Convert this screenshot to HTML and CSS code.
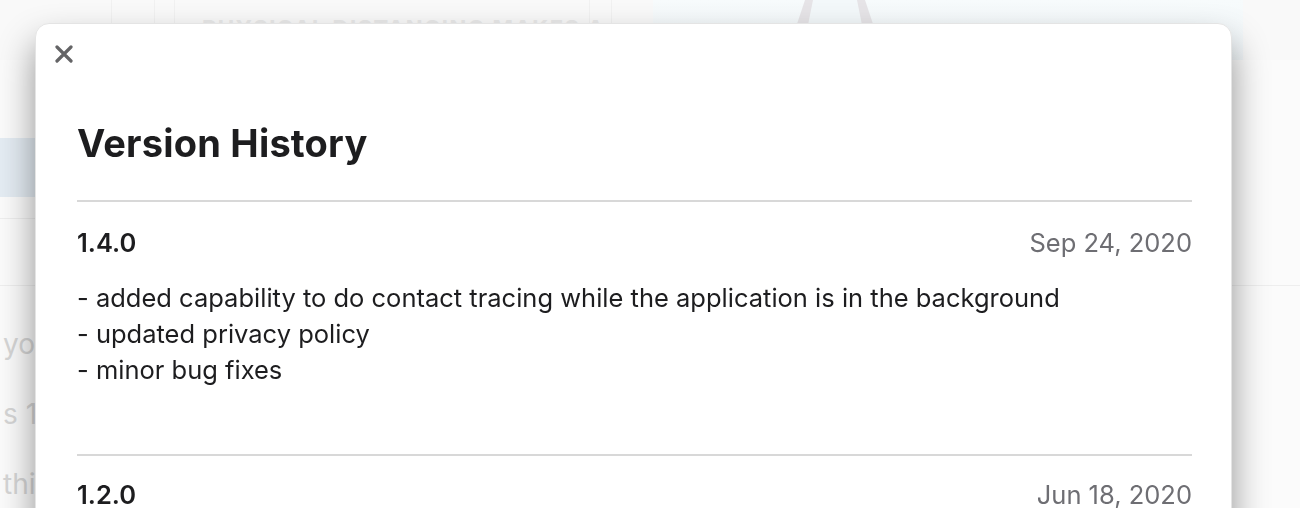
FILE: index.html
```html
<html>
  <head>
<link rel="stylesheet" href="styles.css">
  </head>
  <body>
    <div class="page">
      <div class="strip">
        <div class="cell cell-a"></div>
        <div class="cell cell-b"></div>
        <div class="cell cell-c"></div>
        <div class="cell cell-title">PHYSICAL DISTANCING MAKES A</div>
        <div class="cell cell-d"></div>
        <div class="cell cell-e"></div>
        <div class="hero">
          <svg class="hero-art" width="100" height="60" viewBox="0 0 100 60">
            <polygon points="0,60 20,0 80,0 100,60" fill="#e6e4e7"/>
            <polygon points="16,60 28,0 72,0 84,60" fill="#f3f8fa"/>
          </svg>
        </div>
      </div>
      <div class="promo"></div>
      <div class="rule rule-a"></div>
      <div class="rule rule-b"></div>
      <div class="bg-text">
        <p class="bg-line">you</p>
        <p class="bg-line">s 14</p>
        <p class="bg-line">this</p>
      </div>
    </div>

    <div class="modal">
      <button class="close-btn">
        <svg width="18" height="18" viewBox="0 0 18 18">
          <path d="M2 2 L16 16 M16 2 L2 16" stroke="#646466" stroke-width="3.2" stroke-linecap="round"/>
        </svg>
      </button>
      <h1>Version History</h1>
      <div class="release">
        <div class="release-head">
          <h4>1.4.0</h4>
          <time>Sep 24, 2020</time>
        </div>
        <div class="release-notes">
          <p>- added capability to do contact tracing while the application is in the background</p>
          <p>- updated privacy policy</p>
          <p>- minor bug fixes</p>
        </div>
      </div>
      <div class="release">
        <div class="release-head">
          <h4>1.2.0</h4>
          <time>Jun 18, 2020</time>
        </div>
      </div>
    </div>
  </body>
</html>
```

FILE: styles.css
```css
body{
  margin: 0;
  background: #fbfbfb;
  font-family: Inter, "Noto Sans", sans-serif;
  overflow: hidden;
}

/* faded store page behind the dialog */
.page{
  height: 508px;
}
.strip{
  display: flex;
  height: 60px;
  background: #f9f9f9;
}
.cell{
  border-right: 1px solid #f1f1f1;
}
.cell-a{ width: 111px; }
.cell-b{ width: 42px; }
.cell-c{ width: 19px; }
.cell-title{
  width: 387px;
  padding: 15px 0 0 27px;
  font-size: 22px;
  font-weight: 700;
  letter-spacing: 1.5px;
  color: #e9e9e9;
  white-space: nowrap;
}
.cell-d{ width: 21px; }
.cell-e{ width: 41px; border-right: none; }
.hero{
  width: 458px;
  background: linear-gradient(#f7fbfc, #f1f6f9);
  display: flex;
  padding-left: 132px;
}
.promo{
  width: 560px;
  margin-top: 78px;
  height: 59px;
  background: #e4ecf3;
}
.rule{
  border-top: 1px solid #eeeeee;
}
.rule-a{ margin-top: 21px; width: 560px; }
.rule-b{ margin-top: 66px; }
.bg-text{
  padding-top: 40px;
  color: #d6d6d6;
  font-size: 28px;
}
.bg-line{
  margin: 0 0 34px 3px;
  line-height: 36px;
}

/* dialog */
.modal{
  position: fixed;
  left: 35px;
  top: 23px;
  width: 1197px;
  height: 600px;
  background: #fff;
  border: 1px solid #e4e4e4;
  border-radius: 14px;
  box-shadow: 0 20px 36px rgba(0, 0, 0, 0.42);
  padding: 0 39px 0 41px;
  box-sizing: border-box;
  color: #1d1d1f;
}
.close-btn{
  display: block;
  margin: 21px 0 0 -22px;
  padding: 0;
  border: none;
  background: none;
  width: 18px;
  height: 18px;
}
.close-btn svg{
  display: block;
}
h1{
  margin: 58px 0 0;
  font-size: 38px;
  line-height: 45px;
  font-weight: 700;
  letter-spacing: 0.2px;
}
.release{
  margin-top: 34px;
  border-top: 2px solid #d8d8d8;
  padding-top: 25px;
}
.release + .release{
  margin-top: 66px;
  padding-top: 23px;
}
.release-head{
  display: flex;
  justify-content: space-between;
  align-items: baseline;
}
h4{
  margin: 0;
  font-size: 25.5px;
  line-height: 29px;
  font-weight: 600;
}
time{
  font-size: 25.5px;
  color: #6e6e73;
}
.release-notes{
  margin-top: 22px;
}
.release-notes p{
  margin: 0;
  font-size: 25.5px;
  line-height: 36px;
}
```
